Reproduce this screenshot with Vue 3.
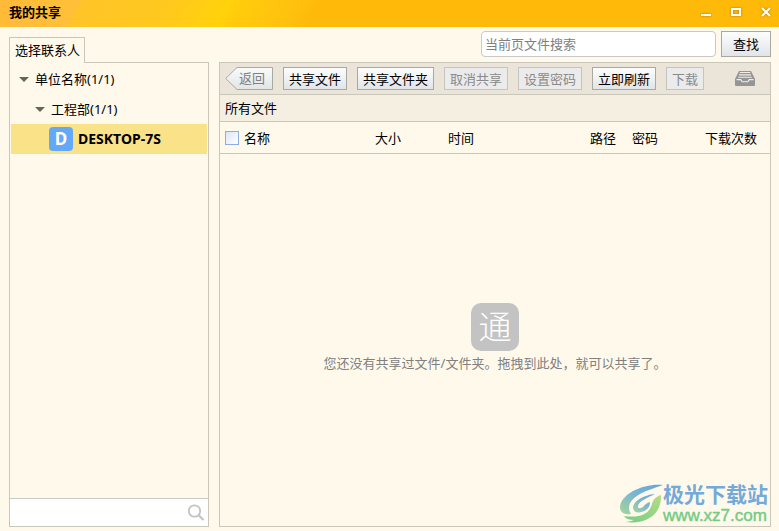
<script setup>
import { ref } from 'vue'

const keyword = ref('')
const contactKeyword = ref('')
const allChecked = ref(false)

const actions = [
  { label: '共享文件', disabled: false },
  { label: '共享文件夹', disabled: false },
  { label: '取消共享', disabled: true },
  { label: '设置密码', disabled: true },
  { label: '立即刷新', disabled: false },
  { label: '下载', disabled: true }
]
</script>

<template>
  <div class="window">
    <header class="title-bar">
      <h1>我的共享</h1>
      <div class="window-controls">
        <button type="button" aria-label="最小化">
          <svg viewBox="0 0 12 12" width="12" height="12"><path d="M1 9h10" stroke="#fff" stroke-width="2"/></svg>
        </button>
        <button type="button" aria-label="最大化">
          <svg viewBox="0 0 12 12" width="12" height="12"><path d="M2 3h8v6H2z" fill="none" stroke="#fff" stroke-width="2"/></svg>
        </button>
        <button type="button" aria-label="关闭">
          <svg viewBox="0 0 12 12" width="12" height="12"><path d="M2 2l8 8M10 2l-8 8" stroke="#fff" stroke-width="2"/></svg>
        </button>
      </div>
    </header>

    <div class="content">
      <!-- 左侧联系人 -->
      <aside class="sidebar">
        <button type="button" class="tab">选择联系人</button>
        <div class="contacts">
          <ul class="tree">
            <li class="node"><span class="arrow"></span>单位名称(1/1)</li>
            <li class="node level-2"><span class="arrow"></span>工程部(1/1)</li>
            <li class="node level-3 selected"><span class="avatar">D</span>DESKTOP-7S</li>
          </ul>
          <div class="contact-search">
            <input v-model="contactKeyword" type="text" aria-label="搜索联系人" />
            <svg viewBox="0 0 18 18" width="18" height="18" fill="none" stroke="#c3c3c3">
              <circle cx="7.5" cy="7" r="5.7" stroke-width="1.8"/>
              <path d="M12 11.5l4.5 4.5" stroke-width="2.2"/>
            </svg>
          </div>
        </div>
      </aside>

      <!-- 右侧文件列表 -->
      <main class="main">
        <form class="search" @submit.prevent>
          <input v-model="keyword" type="text" placeholder="当前页文件搜索" aria-label="当前页文件搜索" />
          <button type="submit">查找</button>
        </form>

        <section class="files">
          <div class="toolbar">
            <button type="button" class="back" disabled>
              <svg viewBox="0 0 48 23" width="48" height="23">
                <defs>
                  <linearGradient id="backFill" x1="0" y1="0" x2="0" y2="1">
                    <stop offset="0" stop-color="#fbfbfb"/>
                    <stop offset="1" stop-color="#e2e4e6"/>
                  </linearGradient>
                </defs>
                <path d="M.7 11.5L12 .5h35.5v22H12z" fill="url(#backFill)" stroke="#aaa8a2"/>
              </svg>
              <span>返回</span>
            </button>
            <button
              v-for="item in actions"
              :key="item.label"
              type="button"
              class="action"
              :disabled="item.disabled"
            >{{ item.label }}</button>
            <button type="button" class="inbox" aria-label="收件箱">
              <svg viewBox="0 0 20 16" width="20" height="16">
                <path d="M4 0h12l4 8v6q0 1-1 1H1q-1 0-1-1V8z" fill="#959595"/>
                <path d="M4.8 1.5h10.4M4 3.9h12M3.2 6.3h13.6" stroke="#f2eee5" stroke-width="1.1"/>
                <path d="M1.5 8.6h4.3l1.4 2.2h5.6l1.4-2.2h4.3" fill="none" stroke="#f2eee5" stroke-width="1.1"/>
              </svg>
            </button>
          </div>
          <div class="path">所有文件</div>
          <table>
            <thead>
              <tr>
                <th>
                  <label><input v-model="allChecked" type="checkbox" />名称</label>
                </th>
                <th class="col-size">大小</th>
                <th class="col-time">时间</th>
                <th class="col-path">路径</th>
                <th class="col-pwd">密码</th>
                <th class="col-count">下载次数</th>
              </tr>
            </thead>
          </table>
          <div class="empty">
            <div class="empty-logo">通</div>
            <p>您还没有共享过文件/文件夹。拖拽到此处，就可以共享了。</p>
          </div>
        </section>
      </main>
    </div>

    <div class="watermark">
      <svg viewBox="0 0 44 42" width="44" height="42">
        <defs>
          <linearGradient id="markBlue" x1="0" y1="1" x2="1" y2="0">
            <stop offset="0" stop-color="#a5d69c"/>
            <stop offset="0.5" stop-color="#7bb6d0"/>
            <stop offset="1" stop-color="#65a3dc"/>
          </linearGradient>
          <linearGradient id="markGreen" x1="0" y1="1" x2="1" y2="0">
            <stop offset="0" stop-color="#74cd86"/>
            <stop offset="1" stop-color="#b4dc84"/>
          </linearGradient>
        </defs>
        <path d="M44 2C26 0 2 10 1 24c0 6 5 8 11 7-5-8 0-15 9-20C28 7 36 5 44 2z" fill="url(#markBlue)"/>
        <path d="M36 11C25 12 14 18 14 25c1 6 8 5 13 2 3-2 4-5 4-8-3 1-5 2-6 4-3 3-7 3-6 0 1-5 9-8 17-12z" fill="url(#markBlue)"/>
        <path d="M42 12c-6 2-8 5-9 9-3 11-13 14-28 12 2 3 6 4 10 4-3 1-6 2-9 2C29 42 43 30 42 12z" fill="url(#markGreen)"/>
      </svg>
      <div class="watermark-text">
        <strong>极光下载站</strong>
        <span>www.xz7.com</span>
      </div>
    </div>
  </div>
</template>

<style>
body {
  margin: 0;
}
</style>

<style scoped>
.window {
  position: relative;
  display: flex;
  flex-direction: column;
  min-height: 100vh;
  box-sizing: border-box;
  background: #fff9eb;
  color: #000;
  font-family: "Noto Sans", "Noto Sans CJK SC", sans-serif;
  font-size: 13px;
  line-height: 20px;
}

button,
input {
  font: inherit;
  color: inherit;
  box-sizing: border-box;
}

.title-bar {
  display: flex;
  align-items: center;
  justify-content: space-between;
  height: 27px;
  padding: 0 7px 0 9px;
  background: linear-gradient(
    120deg,
    #ffba38 0,
    #ffc038 70px,
    #ffc428 73px,
    #ffc91e 150px,
    #ffd20a 200px,
    #ffcb0c 215px,
    #ffc20e 255px,
    #ffb908 280px
  );
}

.title-bar h1 {
  margin: 0 0 4px;
  font-size: 13px;
  line-height: 20px;
}

.window-controls {
  display: flex;
  gap: 18px;
  margin-bottom: 3px;
}

.window-controls button {
  display: flex;
  padding: 0;
  border: none;
  background: none;
}

.window-controls svg {
  filter: drop-shadow(0 0 1px #b07800);
}

.content {
  flex: 1;
  display: grid;
  grid-template-columns: 200px minmax(0, 1fr);
  gap: 10px;
  padding: 4px 8px 4px 9px;
}

.sidebar {
  display: flex;
  flex-direction: column;
  padding-top: 6px;
}

.tab {
  position: relative;
  align-self: flex-start;
  height: 26px;
  margin-bottom: -1px;
  padding: 0 4px 2px 5px;
  border: 1px solid #c9c6ba;
  border-bottom: none;
  background: #fff9eb;
}

.contacts {
  flex: 1;
  display: flex;
  flex-direction: column;
  justify-content: space-between;
  border: 1px solid #c9c6ba;
}

.tree {
  margin: 0;
  padding: 1px;
  list-style: none;
}

.node {
  display: flex;
  align-items: center;
  height: 30px;
  padding-left: 8px;
}

.level-2 {
  padding-left: 24px;
}

.level-3 {
  padding-left: 38px;
}

.selected {
  background: #fae289;
  font-size: 14px;
  font-weight: bold;
}

.arrow {
  margin-right: 6px;
  border: 5px solid transparent;
  border-top-color: #666459;
  border-bottom: none;
}

.avatar {
  width: 24px;
  margin-right: 5px;
  border-radius: 4px;
  background: #64a9f8;
  color: #fff;
  font-size: 17px;
  line-height: 24px;
  text-align: center;
}

.contact-search {
  display: flex;
  align-items: center;
  height: 27px;
  padding-right: 3px;
  border-top: 1px solid #c9c9c9;
  background: #fff;
}

.contact-search input {
  flex: 1;
  min-width: 0;
  height: 27px;
  border: none;
  background: none;
  outline: none;
}

.main {
  display: flex;
  flex-direction: column;
  gap: 5px;
}

.search {
  display: flex;
  justify-content: flex-end;
  gap: 5px;
}

.search input {
  width: 235px;
  height: 26px;
  padding: 0 3px;
  border: 1px solid #c9c9c9;
  border-radius: 4px;
  background: #fff;
}

.search input::placeholder {
  color: #808080;
  opacity: 1;
}

.search button {
  width: 50px;
  height: 26px;
  padding: 0;
}

.search button,
.action {
  border: 1px solid #aaa8a2;
  background: linear-gradient(#fdfdfd, #e1e5e8);
}

.files {
  flex: 1;
  display: flex;
  flex-direction: column;
  border: 1px solid #c9c6ba;
}

.toolbar {
  display: flex;
  align-items: center;
  gap: 10px;
  height: 31px;
  padding: 0 15px 0 5px;
  border-bottom: 1px solid #c9c6ba;
  background: #ebe5d9;
}

.action {
  height: 23px;
  padding: 0 5px;
  line-height: 20px;
}

.action:disabled {
  border-color: #c6c4c0;
  background: #ebebeb;
  color: #8a8a8a;
}

.back {
  display: grid;
  width: 48px;
  height: 23px;
  padding: 0;
  border: none;
  background: none;
  color: #808080;
}

.back svg,
.back span {
  grid-area: 1 / 1;
}

.back span {
  padding-left: 6px;
  line-height: 23px;
}

.inbox {
  display: flex;
  margin-left: auto;
  padding: 0;
  border: none;
  background: none;
}

.path {
  height: 26px;
  padding-left: 5px;
  border-bottom: 1px solid #c9c6ba;
  background: #f5efe2;
  line-height: 26px;
}

table {
  width: 100%;
  table-layout: fixed;
  border-collapse: separate;
  border-spacing: 0;
}

th {
  height: 31px;
  padding: 0 0 0 5px;
  border-bottom: 1px solid #c9c6ba;
  font-weight: normal;
  text-align: left;
  white-space: nowrap;
}

th label {
  display: flex;
  align-items: center;
  gap: 5px;
}

th input {
  appearance: none;
  width: 14px;
  height: 14px;
  margin: 0;
  border: 1px solid #8fade0;
  background: linear-gradient(135deg, #dce5f7, #fff);
}

th input:checked {
  background: #8fade0;
}

.col-size {
  width: 68px;
}

.col-time {
  width: 137px;
}

.col-path {
  width: 37px;
}

.col-pwd {
  width: 68px;
}

.col-count {
  width: 65px;
}

.empty {
  flex: 1;
  display: flex;
  flex-direction: column;
  align-items: center;
  justify-content: center;
  gap: 2px;
  padding-bottom: 4px;
  color: #808080;
}

.empty-logo {
  width: 48px;
  border-radius: 10px;
  background: #c3c3c3;
  color: #fff;
  font-size: 33px;
  font-weight: 300;
  line-height: 48px;
  text-align: center;
}

.empty p {
  margin: 0;
}

/* 右下角站点标识 */
.watermark {
  position: absolute;
  right: 11px;
  bottom: 6px;
  display: flex;
  align-items: center;
  pointer-events: none;
}

.watermark-text {
  display: flex;
  flex-direction: column;
  font-family: "Liberation Sans", "Noto Sans CJK SC", sans-serif;
}

.watermark-text strong {
  color: #74a9d8;
  font-size: 21px;
  font-weight: bold;
  line-height: 24px;
}

.watermark-text span {
  color: #72cb84;
  font-size: 17px;
  line-height: 18px;
  -webkit-text-stroke: 0.4px #72cb84;
}
</style>
